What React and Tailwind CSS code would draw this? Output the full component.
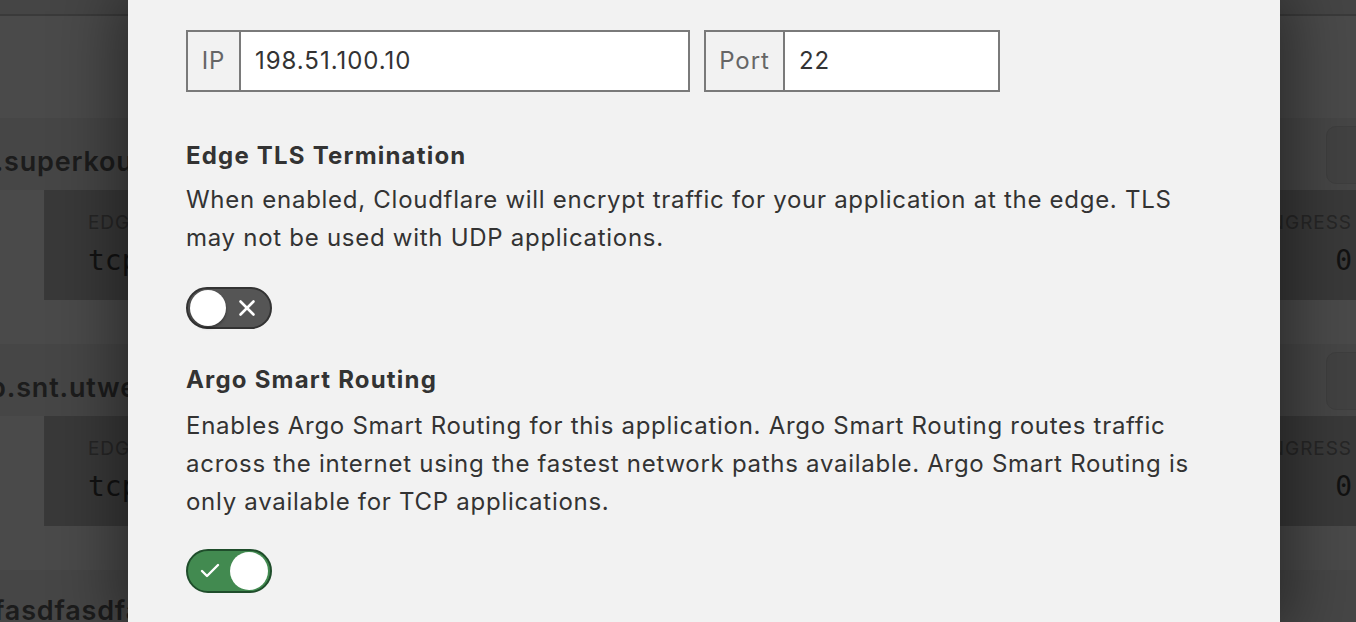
import { X, Check } from 'lucide-react'

function BgRow({ name, shift }) {
  return (
    <div className="flex flex-col">
      <div className="h-[72px] bg-[#464646] flex items-center justify-between overflow-hidden">
        <div
          className={`text-[27px] font-semibold tracking-[0.03em] text-[#1c1c1c] whitespace-nowrap mt-[16px] ${shift}`}
        >
          {name}
        </div>
        <div className="w-[60px] h-[58px] rounded-[10px] bg-[#424242] border border-[#3e3e3e] -mr-[30px] mt-[2px]" />
      </div>
      <div className="ml-[44px] h-[110px] bg-[#393939] flex justify-between pl-[44px] pr-[4px] pt-[19px]">
        <div className="flex flex-col">
          <span className="text-[19px] tracking-wider text-[#262626] uppercase">Edge</span>
          <span className="font-['DejaVu_Sans_Mono',monospace] text-[28px] text-[#121212] mt-[2px]">
            tcp://0.0.0.0
          </span>
        </div>
        <div className="flex flex-col items-end">
          <span className="text-[19px] tracking-wider text-[#262626] uppercase">Ingress</span>
          <span className="font-['DejaVu_Sans_Mono',monospace] text-[28px] text-[#121212] mt-[2px]">
            0
          </span>
        </div>
      </div>
    </div>
  )
}

function InputGroup({ label, value, width, addon }) {
  return (
    <div className={`flex h-[62px] border-2 border-[#7a7a7a] ${width}`}>
      <div
        className={`flex items-center justify-center bg-[#f2f2f2] border-r-2 border-[#7a7a7a] text-[24px] tracking-[0.04em] text-[#666] ${addon}`}
      >
        {label}
      </div>
      <div className="flex-1 bg-white flex items-center pl-[14px] text-[24px] tracking-[0.04em] text-[#333]">
        {value}
      </div>
    </div>
  )
}

export default function App() {
  return (
    <div className="relative w-[1356px] h-[622px] overflow-hidden bg-[#4a4a4a] font-['Inter',sans-serif]">
      {/* page behind the modal */}
      <div className="flex flex-col">
        <div className="h-[16px] bg-[#454545] border-b-2 border-[#3a3a3a]" />
        <div className="h-[102px]" />
        <BgRow name="ssh.superkoubernetes.com" shift="-ml-[54px]" />
        <div className="h-[44px]" />
        <BgRow name="smtp.snt.utwente.nl" shift="-ml-[62px]" />
        <div className="h-[44px]" />
        <div className="h-[72px] bg-[#464646] flex items-center overflow-hidden">
          <div className="text-[27px] font-semibold tracking-[0.03em] text-[#1c1c1c] whitespace-nowrap -ml-[6px] mt-[10px]">
            fasdfasdfasdf.com
          </div>
        </div>
      </div>

      {/* modal */}
      <div className="absolute top-0 left-[128px] w-[1152px] h-[622px] bg-[#f2f2f2] shadow-[0_0_60px_10px_rgba(0,0,0,0.45)] pl-[58px] pr-[58px] pt-[30px] text-[#333]">
        <div className="flex gap-[14px]">
          <InputGroup label="IP" value="198.51.100.10" width="w-[504px]" addon="w-[53px]" />
          <InputGroup label="Port" value="22" width="w-[296px]" addon="w-[79px]" />
        </div>

        <h3 className="mt-[48px] text-[24px] font-bold tracking-[0.05em] leading-[32px]">
          Edge TLS Termination
        </h3>
        <p className="mt-[9px] text-[24px] tracking-[0.03em] leading-[38px]">
          When enabled, Cloudflare will encrypt traffic for your application at the edge. TLS
          may not be used with UDP applications.
        </p>
        <div className="mt-[30px] w-[86px] h-[42px] rounded-full bg-[#555] border-2 border-[#333] flex items-center px-[2px]">
          <div className="w-[36px] h-[36px] rounded-full bg-white shadow-[0_2px_3px_rgba(0,0,0,0.35)]" />
          <div className="flex-1 flex justify-center">
            <X size={26} strokeWidth={2.4} className="text-white" />
          </div>
        </div>

        <h3 className="mt-[35px] text-[24px] font-bold tracking-[0.05em] leading-[32px]">
          Argo Smart Routing
        </h3>
        <p className="mt-[11px] text-[24px] tracking-[0.03em] leading-[38px]">
          Enables Argo Smart Routing for this application. Argo Smart Routing routes traffic
          across the internet using the fastest network paths available. Argo Smart Routing is
          only available for TCP applications.
        </p>
        <div className="mt-[28px] w-[86px] h-[44px] rounded-full bg-[#428a50] border-2 border-[#1f4d2b] flex items-center px-[2px]">
          <div className="flex-1 flex justify-center">
            <Check size={24} strokeWidth={2.4} className="text-white" />
          </div>
          <div className="w-[38px] h-[38px] rounded-full bg-white" />
        </div>
      </div>
    </div>
  )
}
